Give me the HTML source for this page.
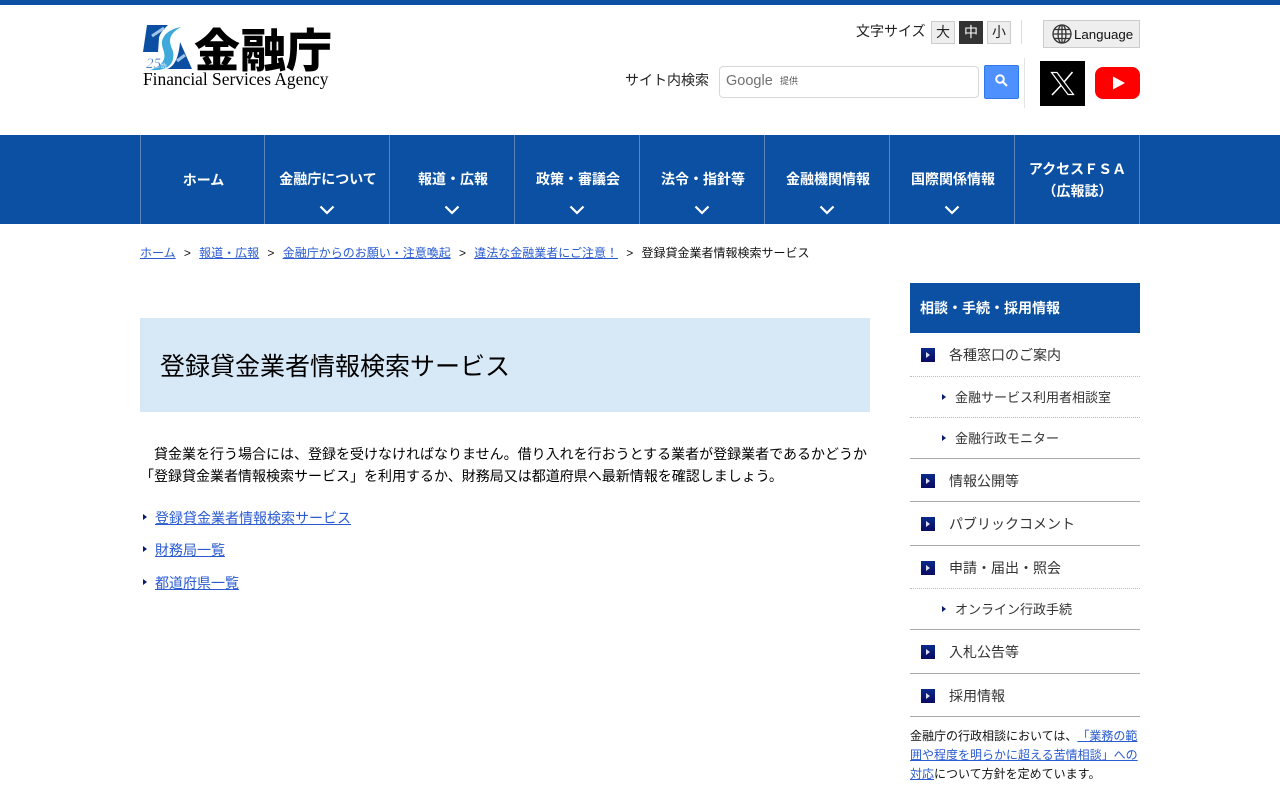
<!DOCTYPE html>
<html lang="ja"><head><meta charset="utf-8"><title>登録貸金業者情報検索サービス</title>
<style>
*{box-sizing:border-box}
html,body{margin:0;padding:0;width:1280px;height:800px;overflow:hidden;background:#fff}
body{font-family:"Liberation Sans","Noto Sans CJK JP",sans-serif;color:#000;position:relative;text-spacing-trim:space-all}
.a{position:absolute;white-space:nowrap}
a{color:#2a5bd0;text-decoration:underline}
.nav{position:absolute;top:135px;height:89px;width:125px;border-left:1px solid #5c86bb;color:#fff;font-weight:bold;font-size:14px;text-align:center}
.nav span{position:absolute;left:2px;right:0;top:33px;line-height:22px}
.nav svg{position:absolute;left:54px;top:70px}
.s1{position:absolute;left:910px;width:230px;font-size:14px;color:#333}
.s1 i{position:absolute;left:11px;width:14px;height:14px;background:linear-gradient(#0a2a8a,#0a0a60)}
.s1 i:after{content:"";position:absolute;left:5px;top:4px;border-left:4px solid #dde;border-top:3px solid transparent;border-bottom:3px solid transparent}
.s1 b{position:absolute;left:39px;font-weight:normal;white-space:nowrap;line-height:20px}
.s2{position:absolute;left:955px;font-size:13px;color:#333;white-space:nowrap;line-height:20px}
.t{position:absolute;width:0;height:0;border-left:4px solid #0a1a70;border-top:3px solid transparent;border-bottom:3px solid transparent}
.hr{position:absolute;left:910px;width:230px;height:1px;background:#aaa}
.dot{position:absolute;left:910px;width:230px;height:0;border-top:1px dotted #bbb}
.fs{position:absolute;top:21px;width:24px;height:23px;border:1px solid #ccc;background:#eee;font-size:14px;text-align:center;line-height:21px;color:#222}
.sep{margin:0 8.25px}
</style></head><body>
<div class="a" style="left:0;top:0;width:1280px;height:5px;background:#0b50a2"></div>

<svg class="a" style="left:140px;top:24px" width="60" height="50" viewBox="0 0 60 50">
<path d="M7 1H28C24 5 20 9 19 14L18 28H3Z" fill="#0b4ea2"/>
<path d="M41 3C30 5 24 10 22 17C21 24 26 28 24 35C22 41 16 44 10 46C22 47 31 44 33 35C35 27 30 23 30 17C30 11 34 7 41 3Z" fill="#3fa9dc"/>
<path d="M40 18L52 45H27C36 42 39 30 40 18Z" fill="#0b4ea2"/>
<path d="M12 12L24 4M37 37L45 31" stroke="#9fc4e8" stroke-width="3" fill="none"/>
<text x="6" y="44" font-family="Liberation Serif" font-size="15" font-style="italic" fill="#2a6db5" stroke="#fff" stroke-width=".3">25<tspan font-size="7">th</tspan></text>
</svg>
<div class="a" style="left:194px;top:15px;font-size:46px;line-height:66px;font-weight:900;font-family:'Noto Sans CJK JP',sans-serif">金融庁</div>
<div class="a" style="left:143px;top:68px;font-family:'Liberation Serif',serif;font-size:17.4px;line-height:22px">Financial Services Agency</div>

<div class="a" style="left:856px;top:21px;font-size:14px;line-height:20px;color:#222">文字サイズ</div>
<div class="fs" style="left:931px">大</div>
<div class="fs" style="left:959px;background:#333;color:#fff;border-color:#333">中</div>
<div class="fs" style="left:987px">小</div>
<div class="a" style="left:1021px;top:20px;width:1px;height:24px;background:#ddd"></div>
<div class="a" style="left:1043px;top:20px;width:97px;height:28px;background:#eee;border:1px solid #ccc;font-size:13.3px;line-height:27px;padding-left:30px;color:#111">Language</div>
<svg class="a" style="left:1052px;top:24px" width="20" height="20" viewBox="0 0 20 20" fill="none" stroke="#333" stroke-width="1.3"><circle cx="10" cy="10" r="9"/><ellipse cx="10" cy="10" rx="4" ry="9"/><path d="M1 10H19M2.3 5.5H17.7M2.3 14.5H17.7M10 1V19"/></svg>

<div class="a" style="left:625px;top:70px;font-size:14px;line-height:20px;color:#222">サイト内検索</div>
<div class="a" style="left:719px;top:66px;width:260px;height:32px;border:1px solid #d8d8d8;border-radius:4px;background:#fff"></div>
<div class="a" style="left:726px;top:71px;font-size:14.5px;line-height:20px;color:#717171">Google</div>
<div class="a" style="left:780px;top:73px;font-size:9px;line-height:16px;color:#555">提供</div>
<div class="a" style="left:984px;top:65px;width:35px;height:34px;background:#4d90fe;border:1px solid #3079ed;border-radius:2px"></div>
<svg class="a" style="left:994px;top:73px" width="15" height="15" viewBox="0 0 15 15" fill="none" stroke="#fff" stroke-width="2"><circle cx="6" cy="6" r="3.8"/><path d="M9 9L13 13"/></svg>
<div class="a" style="left:1024px;top:58px;width:1px;height:50px;background:#e4e4e4"></div>
<div class="a" style="left:1040px;top:61px;width:45px;height:45px;background:#000"></div>
<svg class="a" style="left:1050px;top:71px" width="25" height="25" viewBox="0 0 25 25" fill="none" stroke="#fff"><path d="M1.5 1.5H7L23.5 23.5H18Z" stroke-width="1.2"/><path d="M22.5 1L14 11M11 14.5L2 24" stroke-width="1.6"/></svg>
<svg class="a" style="left:1095px;top:67px" width="45" height="32" viewBox="0 0 45 32"><rect width="45" height="32" rx="8" fill="#f00"/><path d="M18 9.5L30 16L18 22.5Z" fill="#fff"/></svg>

<div class="a" style="left:0;top:135px;width:1280px;height:89px;background:#0b50a2"></div>
<div class="nav" style="left:140px"><span style="top:34px;left:1px">ホーム</span></div>
<div class="nav" style="left:264px"><span>金融庁について</span><svg width="16" height="10" viewBox="0 0 16 10" fill="none" stroke="#fff" stroke-width="2.2"><path d="M1.5 1.5L8 8L14.5 1.5"/></svg></div>
<div class="nav" style="left:389px"><span>報道・広報</span><svg width="16" height="10" viewBox="0 0 16 10" fill="none" stroke="#fff" stroke-width="2.2"><path d="M1.5 1.5L8 8L14.5 1.5"/></svg></div>
<div class="nav" style="left:514px"><span>政策・審議会</span><svg width="16" height="10" viewBox="0 0 16 10" fill="none" stroke="#fff" stroke-width="2.2"><path d="M1.5 1.5L8 8L14.5 1.5"/></svg></div>
<div class="nav" style="left:639px"><span>法令・指針等</span><svg width="16" height="10" viewBox="0 0 16 10" fill="none" stroke="#fff" stroke-width="2.2"><path d="M1.5 1.5L8 8L14.5 1.5"/></svg></div>
<div class="nav" style="left:764px"><span>金融機関情報</span><svg width="16" height="10" viewBox="0 0 16 10" fill="none" stroke="#fff" stroke-width="2.2"><path d="M1.5 1.5L8 8L14.5 1.5"/></svg></div>
<div class="nav" style="left:889px"><span>国際関係情報</span><svg width="16" height="10" viewBox="0 0 16 10" fill="none" stroke="#fff" stroke-width="2.2"><path d="M1.5 1.5L8 8L14.5 1.5"/></svg></div>
<div class="nav" style="left:1014px;width:126px;border-right:1px solid #5c86bb"><span style="top:23px;left:1px">アクセスＦＳＡ<br>（広報誌）</span></div>

<div class="a" style="left:140px;top:244px;font-size:12px;line-height:18px;color:#111"><a href="#">ホーム</a><span class="sep">&gt;</span><a href="#">報道・広報</a><span class="sep">&gt;</span><a href="#">金融庁からのお願い・注意喚起</a><span class="sep">&gt;</span><a href="#">違法な金融業者にご注意！</a><span class="sep">&gt;</span>登録貸金業者情報検索サービス</div>

<div class="a" style="left:140px;top:318px;width:730px;height:94px;background:#d7e8f6;padding-left:20px;font-size:25px;line-height:98px">登録貸金業者情報検索サービス</div>
<div class="a" style="left:140px;top:443px;width:730px;font-size:14px;line-height:22px">　貸金業を行う場合には、登録を受けなければなりません。借り入れを行おうとする業者が登録業者であるかどうか<br>「登録貸金業者情報検索サービス」を利用するか、財務局又は都道府県へ最新情報を確認しましょう。</div>
<div class="t" style="left:143px;top:514px"></div><a class="a" href="#" style="left:155px;top:508px;font-size:14px;line-height:20px">登録貸金業者情報検索サービス</a>
<div class="t" style="left:143px;top:546px"></div><a class="a" href="#" style="left:155px;top:540px;font-size:14px;line-height:20px">財務局一覧</a>
<div class="t" style="left:143px;top:579px"></div><a class="a" href="#" style="left:155px;top:573px;font-size:14px;line-height:20px">都道府県一覧</a>

<div class="a" style="left:910px;top:283px;width:230px;height:50px;background:#0b50a2;color:#fff;font-weight:bold;font-size:14px;line-height:51px;padding-left:10px">相談・手続・採用情報</div>
<div class="s1" style="top:0"><i style="top:348px"></i><b style="top:345px">各種窓口のご案内</b></div>
<div class="dot" style="top:376px"></div>
<div class="t" style="left:942px;top:394px"></div><div class="s2" style="top:388px">金融サービス利用者相談室</div>
<div class="dot" style="top:417px"></div>
<div class="t" style="left:942px;top:435px"></div><div class="s2" style="top:429px">金融行政モニター</div>
<div class="hr" style="top:458px"></div>
<div class="s1" style="top:0"><i style="top:474px"></i><b style="top:471px">情報公開等</b></div>
<div class="hr" style="top:501px"></div>
<div class="s1" style="top:0"><i style="top:517px"></i><b style="top:514px">パブリックコメント</b></div>
<div class="hr" style="top:545px"></div>
<div class="s1" style="top:0"><i style="top:561px"></i><b style="top:558px">申請・届出・照会</b></div>
<div class="dot" style="top:588px"></div>
<div class="t" style="left:942px;top:606px"></div><div class="s2" style="top:600px">オンライン行政手続</div>
<div class="hr" style="top:629px"></div>
<div class="s1" style="top:0"><i style="top:645px"></i><b style="top:642px">入札公告等</b></div>
<div class="hr" style="top:673px"></div>
<div class="s1" style="top:0"><i style="top:689px"></i><b style="top:686px">採用情報</b></div>
<div class="hr" style="top:716px"></div>
<div class="a" style="left:910px;top:727px;width:230px;font-size:12px;line-height:19.2px;color:#111;white-space:normal">金融庁の行政相談においては、<a href="#">「業務の範囲や程度を明らかに超える苦情相談」への対応</a>について方針を定めています。</div>
</body></html>
